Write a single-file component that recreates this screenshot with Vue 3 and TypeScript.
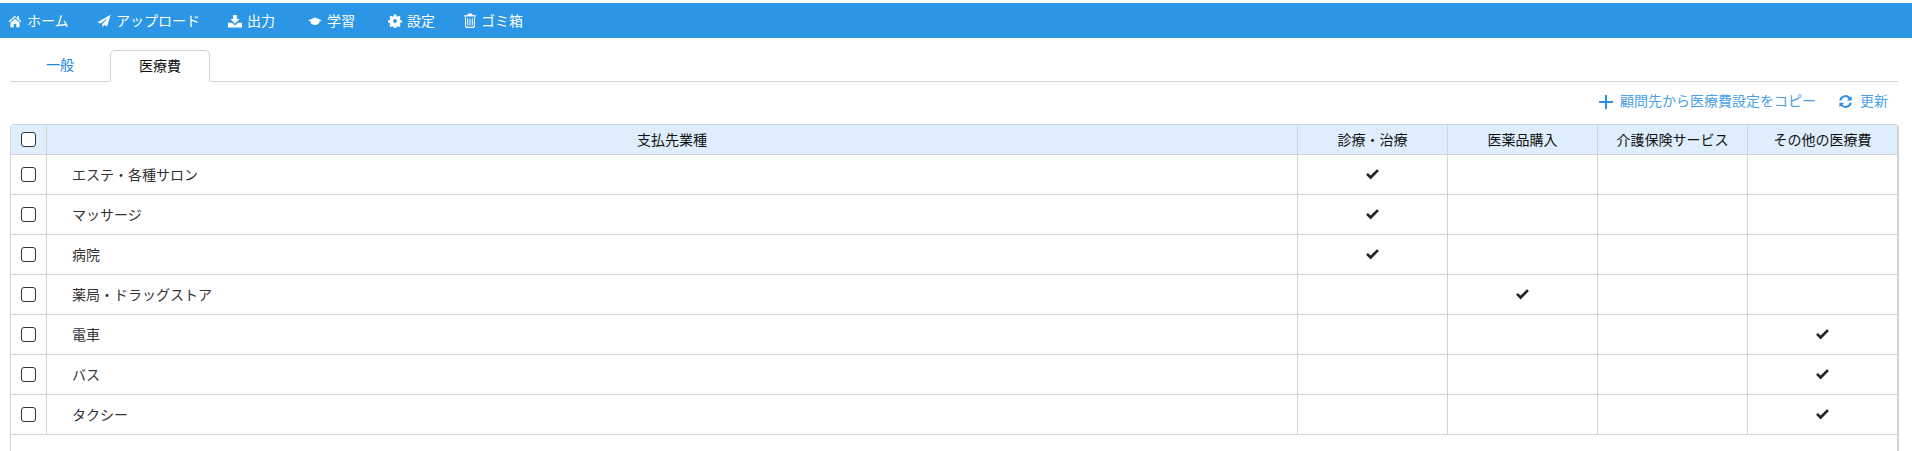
<script setup lang="ts">
const rows: { name: string; col: number }[] = [
  { name: 'エステ・各種サロン', col: 0 },
  { name: 'マッサージ', col: 0 },
  { name: '病院', col: 0 },
  { name: '薬局・ドラッグストア', col: 1 },
  { name: '電車', col: 3 },
  { name: 'バス', col: 3 },
  { name: 'タクシー', col: 3 },
]
const heads: string[] = ['診療・治療', '医薬品購入', '介護保険サービス', 'その他の医療費']
</script>

<template>
  <div class="page">
    <nav class="nav">
      <a class="nav-item w-home">
        <svg class="ni" viewBox="0 0 16 16"><path d="M8 2 .6 8.300l.9 1L8 3.800l6.500 5.500.9-1-2.900-2.500V2.500h-2v2.600L8 2Z" /><path d="M2.800 9.800 8 5.400l5.200 4.400V15H9.500v-3.800h-3V15H2.800V9.800Z" /></svg>
        <span>ホーム</span>
      </a>
      <a class="nav-item w-up">
        <svg class="ni" viewBox="0 0 16 16"><path d="M15.500 .8 .5 9.300l3.800 1.600L13 3.700 6 11.700v3.500l2.300-2.700 3.400 1.400L15.500 .8Z" /></svg>
        <span>アップロード</span>
      </a>
      <a class="nav-item w-out">
        <svg class="ni" viewBox="0 0 16 16"><path d="M5.800 1h4.400v4.800h3L8 11 2.800 5.800h3V1Z" /><path d="M0 10h4.500L8 13.200 11.500 10H16v5.500H0V10Z" /></svg>
        <span>出力</span>
      </a>
      <a class="nav-item w-learn">
        <svg class="ni" viewBox="0 0 16 16"><path d="M8 4 0 7.300l3.200 1.400v2C4.400 12 6.200 12.500 8 12.500s3.600-.5 4.800-1.800v-2L16 7.300 8 4Z" /></svg>
        <span>学習</span>
      </a>
      <a class="nav-item w-set">
        <svg class="ni" viewBox="0 0 16 16"><path fill-rule="evenodd" d="M6.700 1h2.600l.4 2 1.300.6 1.700-1.100 1.800 1.800-1.100 1.700.6 1.300 2 .4v2.600l-2 .4-.6 1.300 1.100 1.700-1.800 1.800-1.700-1.100-1.300.6-.4 2H6.700l-.4-2-1.300-.6-1.700 1.100-1.800-1.800 1.100-1.700-.6-1.300-2-.4V7.700l2-.4.6-1.300-1.100-1.700 1.800-1.800 1.700 1.100 1.300-.6.400-2ZM8 6.300a2.200 2.200 0 1 0 0 4.400 2.200 2.200 0 0 0 0-4.400Z" transform="translate(0 -.5)" /></svg>
        <span>設定</span>
      </a>
      <a class="nav-item">
        <svg class="trash" viewBox="0 0 12 15"><path fill-rule="evenodd" d="M4 .5h4l.8 1.800H12v1.200H0V2.300h3.200L4 .5ZM1 4.200h1.100v8.900c0 .5.300.7.700.7h6.400c.4 0 .7-.2.7-.7V4.200H11v9c0 1-.7 1.700-1.700 1.700H2.700C1.700 14.900 1 14.200 1 13.200v-9Z" /><path d="M3.200 5.500h1v7h-1v-7ZM5.500 5.500h1v7h-1v-7ZM7.800 5.500h1v7h-1v-7Z" /></svg>
        <span>ゴミ箱</span>
      </a>
    </nav>

    <div class="tabs">
      <a class="tab">一般</a>
      <a class="tab active">医療費</a>
    </div>

    <div class="actions">
      <a class="action">
        <svg class="plus" viewBox="0 0 14 14"><path d="M6 0h2v6h6v2H8v6H6V8H0V6h6V0Z" /></svg>
        <span>顧問先から医療費設定をコピー</span>
      </a>
      <a class="action">
        <svg class="refresh" viewBox="0 0 16 16"><path d="M14.500 1.800v5H9.500l1.900-1.900A4.400 4.400 0 0 0 3.700 6.800H1.300a6.800 6.800 0 0 1 11.700-3.400l1.500-1.600Z" /><path d="M1.500 14.200v-5h5L4.600 11.100a4.400 4.400 0 0 0 7.700-1.900h2.400A6.800 6.800 0 0 1 3 12.600l-1.500 1.600Z" /></svg>
        <span>更新</span>
      </a>
    </div>

    <div class="table">
      <div class="row head">
        <div class="cell c-check"><span class="box"></span></div>
        <div class="cell c-name center txt">支払先業種</div>
        <div v-for="h in heads" :key="h" class="cell c-col center txt">{{ h }}</div>
      </div>
      <div v-for="r in rows" :key="r.name" class="row">
        <div class="cell c-check"><span class="box"></span></div>
        <div class="cell c-name name txt">{{ r.name }}</div>
        <div v-for="(h, i) in heads" :key="h" class="cell c-col center">
          <svg v-if="i === r.col" class="check" viewBox="0 0 14 12"><path d="M1 6.200 2.700 4.500 5.200 7l6-6L13 2.800 5.200 10.600 1 6.200Z" /></svg>
        </div>
      </div>
    </div>
  </div>
</template>

<style>
html, body { margin: 0; background: #fff; overflow: hidden; }
</style>

<style scoped>
.page {
  height: 451px;
  padding-top: 3px;
  box-sizing: border-box;
  font-family: "Noto Sans CJK JP", "Liberation Sans", sans-serif;
  font-size: 14px;
  color: #212529;
  overflow: hidden;
}
.nav {
  height: 35px;
  background: #2b96e5;
  display: flex;
  align-items: center;
  padding-left: 8px;
  padding-bottom: 2px;
  box-sizing: border-box;
  color: #fff;
}
.nav-item { display: flex; align-items: center; gap: 5px; }
.w-home { width: 89px; }
.w-up { width: 131px; }
.w-out { width: 80px; }
.w-learn { width: 80px; }
.w-set { width: 76px; }
.ni { width: 14px; height: 14px; fill: #fff; flex: none; margin-top: 2px; }
.trash { width: 12px; height: 15px; fill: #fff; flex: none; margin-top: 2px; }
.tabs {
  margin: 12px 14px 0 10px;
  height: 31px;
  display: flex;
  border-bottom: 1px solid #ced4da;
}
.tab {
  width: 100px;
  height: 31px;
  padding-bottom: 3px;
  display: flex;
  align-items: center;
  justify-content: center;
  color: #1a85e8;
  box-sizing: border-box;
}
.tab.active {
  color: #111;
  background: #fff;
  border: 1px solid #ced4da;
  border-bottom-color: #fff;
  border-radius: 5px 5px 0 0;
  height: 32px;
}
.actions {
  height: 42px;
  margin-right: 24px;
  padding-bottom: 6px;
  box-sizing: border-box;
  display: flex;
  justify-content: flex-end;
  align-items: center;
  gap: 22px;
  color: #4a9fe6;
}
.action { display: flex; align-items: center; gap: 7px; }
.plus { width: 14px; height: 14px; fill: #2b8fe0; margin-top: 3px; }
.refresh { width: 15px; height: 15px; fill: #2b8fe0; margin-top: 3px; }
.table {
  margin: 0 13px 0 10px;
  height: 330px;
  border: 1px solid #ced4da;
  border-right-width: 2px;
  border-radius: 4px 4px 0 0;
  box-sizing: border-box;
}
.row {
  display: flex;
  height: 40px;
  box-sizing: border-box;
  border-bottom: 1px solid #ced4da;
}
.row.head { height: 30px; background: #deeefd; color: #111; }
.cell {
  display: flex;
  align-items: center;
  box-sizing: border-box;
  border-left: 1px solid #ced4da;
}
.c-check { width: 35px; justify-content: center; border-left: 0; }
.c-name { flex: 1; min-width: 0; }
.c-col { width: 150px; }
.center { justify-content: center; }
.txt { padding-bottom: 2px; }
.name { padding-left: 25px; color: #333; }
.box {
  width: 15px;
  height: 15px;
  box-sizing: border-box;
  border: 1px solid #333;
  border-radius: 3px;
  background: #fff;
}
.check { width: 15px; height: 13px; fill: #212529; }
</style>
